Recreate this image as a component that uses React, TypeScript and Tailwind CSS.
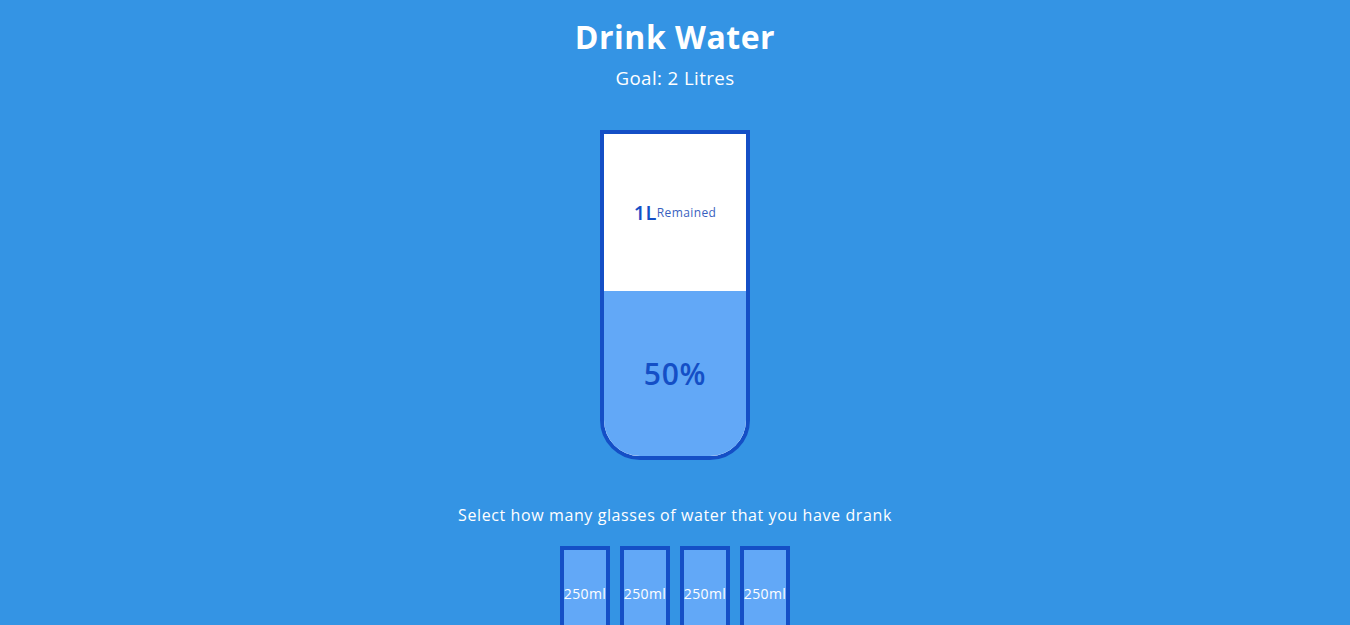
import React, { useState } from 'react';

const GLASSES = 4;

function App() {
    const [full] = useState(GLASSES);
    const total = 8;
    const pct = (full / total) * 100;

    return (
        <div
            className="flex min-h-[625px] flex-col items-center bg-[#3494e4] pt-[7px] text-white"
            style={{ fontFamily: '"Open Sans", "DejaVu Sans", sans-serif' }}
        >
            <h1 className="mt-[10px] text-[32px] leading-[39px] font-bold tracking-[0.5px]">Drink Water</h1>
            <h3 className="my-[10px] text-[18.72px] leading-[23px] font-normal tracking-[0.4px]">Goal: 2 Litres</h3>

            {/* big cup */}
            <div className="mt-[31px] flex h-[330px] w-[150px] flex-col overflow-hidden rounded-b-[40px] border-4 border-[#144fc6] bg-white text-[#144fc6]">
                <div className="flex flex-1 items-center justify-center tracking-[0.4px]">
                    <span className="text-[20px] leading-none font-semibold">1L</span>
                    <small className="text-[12px] leading-none text-[#3a5fc0]">Remained</small>
                </div>
                <div
                    className="flex items-center justify-center bg-[#62a8f7] text-[30px] font-semibold tracking-[0.8px]"
                    style={{ height: (pct / 100) * 330 }}
                >
                    {pct}%
                </div>
            </div>

            <p className="mt-[46px] text-[16px] leading-[19.5px] tracking-[0.6px]">
                Select how many glasses of water that you have drank
            </p>

            <div className="mt-[15px] flex w-[280px] flex-wrap justify-center">
                {Array.from({ length: GLASSES }).map((_, i) => (
                    <div
                        key={i}
                        className="m-[5px] flex h-[95px] w-[50px] items-center justify-center rounded-b-[15px] border-4 border-[#144fc6] bg-[#62a8f7] text-[14px] tracking-[0.4px] text-white"
                    >
                        250ml
                    </div>
                ))}
            </div>
        </div>
    );
}

export default App;
